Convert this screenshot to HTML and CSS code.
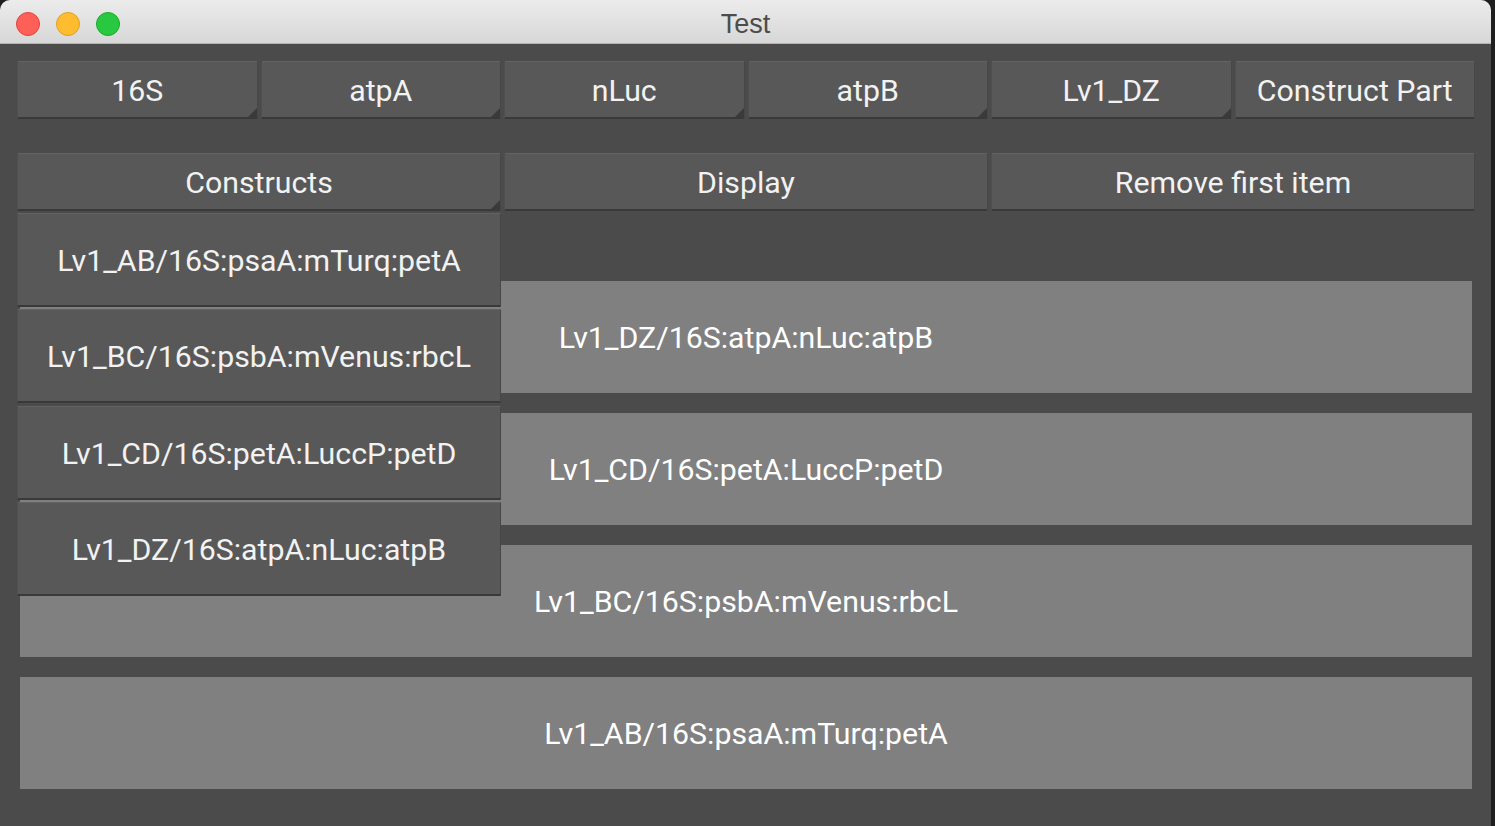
FILE: index.html
```html
<!DOCTYPE html>
<html>
<head>
<meta charset="utf-8">
<title>Test</title>
<link rel="stylesheet" href="styles.css">
</head>
<body>
<div class="window">
  <div class="titlebar">
    <div class="lights">
      <span class="light red"></span>
      <span class="light yellow"></span>
      <span class="light green"></span>
    </div>
    <div class="title">Test</div>
  </div>
  <div class="content">
    <div class="row row6">
      <div class="btn spinner">16S</div>
      <div class="btn spinner">atpA</div>
      <div class="btn spinner">nLuc</div>
      <div class="btn spinner">atpB</div>
      <div class="btn spinner">Lv1_DZ</div>
      <div class="btn">Construct Part</div>
    </div>
    <div class="row row3">
      <div class="btn spinner">Constructs</div>
      <div class="btn">Display</div>
      <div class="btn">Remove first item</div>
    </div>
    <div class="boxes">
      <div class="box">Lv1_DZ/16S:atpA:nLuc:atpB</div>
      <div class="box">Lv1_CD/16S:petA:LuccP:petD</div>
      <div class="box">Lv1_BC/16S:psbA:mVenus:rbcL</div>
      <div class="box">Lv1_AB/16S:psaA:mTurq:petA</div>
    </div>
  </div>
  <div class="dropdown">
    <div class="item">Lv1_AB/16S:psaA:mTurq:petA</div>
    <div class="item">Lv1_BC/16S:psbA:mVenus:rbcL</div>
    <div class="item">Lv1_CD/16S:petA:LuccP:petD</div>
    <div class="item">Lv1_DZ/16S:atpA:nLuc:atpB</div>
  </div>
</div>
</body>
</html>
```

FILE: styles.css
```css
html, body {
  margin: 0;
  padding: 0;
  background: #1f1f1f;
  width: 1495px;
  height: 826px;
  overflow: hidden;
}

.window {
  position: relative;
  width: 1491px;
  height: 826px;
  background: #4b4b4b;
  border-radius: 10px 10px 0 0;
  overflow: hidden;
  font-family: Roboto, "Noto Sans", sans-serif;
}

.titlebar {
  position: relative;
  height: 43px;
  background: linear-gradient(#ececec, #d7d7d7);
  border-bottom: 1px solid #b4b4b4;
  display: flex;
  align-items: center;
  justify-content: center;
}

.lights {
  position: absolute;
  left: 16px;
  top: 12px;
  display: flex;
  gap: 16px;
}

.light {
  width: 24px;
  height: 24px;
  border-radius: 50%;
  box-sizing: border-box;
}
.red { background: #fe5f57; border: 1px solid #e0443e; }
.yellow { background: #febc2e; border: 1px solid #dea123; }
.green { background: #28c840; border: 1px solid #1aab29; }

.title {
  font-family: "Liberation Sans", Arial, sans-serif;
  font-size: 27px;
  color: #4c4c4c;
  padding-top: 5px;
  padding-left: 0;
}

.content {
  padding: 17px 16px 0 17px;
  display: flex;
  flex-direction: column;
}

.row {
  display: grid;
  gap: 3px;
  height: 58px;
}
.row6 { grid-template-columns: repeat(6, 1fr); }
.row3 { grid-template-columns: repeat(3, 1fr); margin-top: 34px; }

.btn, .item {
  position: relative;
  background: #585858;
  color: #f2f2f2;
  font-size: 30.3px;
  display: flex;
  align-items: center;
  justify-content: center;
  border-radius: 2px;
  box-sizing: border-box;
  border-top: 1px solid #636363;
  border-bottom: 2px solid #393939;
  border-left: 1px solid #4f4f4f;
  border-right: 1px solid #474747;
  white-space: nowrap;
}

.btn {
  padding-top: 1px;
}

.spinner::after {
  content: "";
  position: absolute;
  right: 0;
  bottom: 0;
  width: 0;
  height: 0;
  border-style: solid;
  border-width: 0 0 9px 9px;
  border-color: transparent transparent #3a3a3a transparent;
}

.boxes {
  margin-top: 70px;
  padding: 0 3px;
  display: flex;
  flex-direction: column;
  gap: 20px;
}

.box {
  height: 112px;
  background: #808080;
  color: #ffffff;
  font-size: 30.3px;
  display: flex;
  align-items: center;
  justify-content: center;
}

.dropdown {
  position: absolute;
  left: 17px;
  top: 213px;
  width: 484px;
  display: flex;
  flex-direction: column;
  gap: 2.4px;
}

.item {
  height: 94px;
  border-radius: 1px;
  padding-top: 2px;
}
```
